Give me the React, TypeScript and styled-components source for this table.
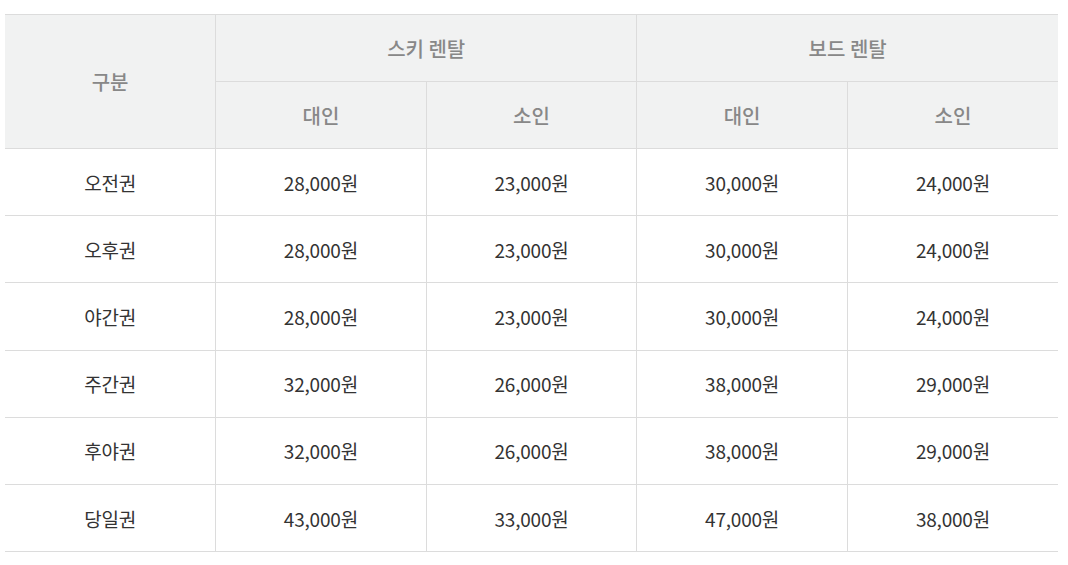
import React from "react";
import styled, { createGlobalStyle } from "styled-components";

const Global = createGlobalStyle`
  html, body { margin: 0; padding: 0; background: #fff; }
  body { font-family: "Noto Sans CJK KR", "Noto Sans", sans-serif; }
`;

const Wrap = styled.div`
  padding: 14px 10px 0 5px;
`;

const Table = styled.table`
  width: 1053px;
  border-collapse: collapse;
  table-layout: fixed;
  border-top: 1px solid #dcdcdc;
`;

const Th = styled.th`
  height: 66px;
  background: #f1f2f2;
  color: #888;
  font-weight: 500;
  font-size: 20px;
  text-align: center;
  vertical-align: middle;
  border-bottom: 1px solid #dcdcdc;
  border-left: 1px solid #dcdcdc;
  padding: 0;
  &:first-child { border-left: none; }
`;

const SubTh = styled(Th)`
  &:first-child { border-left: 1px solid #dcdcdc; }
`;

const Td = styled.td`
  height: 66.2px;
  color: #333;
  font-size: 19px;
  font-weight: 400;
  text-align: center;
  vertical-align: middle;
  border-bottom: 1px solid #dcdcdc;
  border-left: 1px solid #dcdcdc;
  padding: 0;
  letter-spacing: -0.2px;
  &:first-child { border-left: none; }
`;

const rows: [string, string, string, string, string][] = [
  ["오전권", "28,000원", "23,000원", "30,000원", "24,000원"],
  ["오후권", "28,000원", "23,000원", "30,000원", "24,000원"],
  ["야간권", "28,000원", "23,000원", "30,000원", "24,000원"],
  ["주간권", "32,000원", "26,000원", "38,000원", "29,000원"],
  ["후야권", "32,000원", "26,000원", "38,000원", "29,000원"],
  ["당일권", "43,000원", "33,000원", "47,000원", "38,000원"],
];

export default function App() {
  return (
    <Wrap>
      <Global />
      <Table>
        <thead>
          <tr>
            <Th rowSpan={2}>구분</Th>
            <Th colSpan={2}>스키 렌탈</Th>
            <Th colSpan={2}>보드 렌탈</Th>
          </tr>
          <tr>
            <SubTh>대인</SubTh>
            <SubTh>소인</SubTh>
            <SubTh>대인</SubTh>
            <SubTh>소인</SubTh>
          </tr>
        </thead>
        <tbody>
          {rows.map((r) => (
            <tr key={r[0]}>
              {r.map((c, i) => (
                <Td key={i}>{c}</Td>
              ))}
            </tr>
          ))}
        </tbody>
      </Table>
    </Wrap>
  );
}
